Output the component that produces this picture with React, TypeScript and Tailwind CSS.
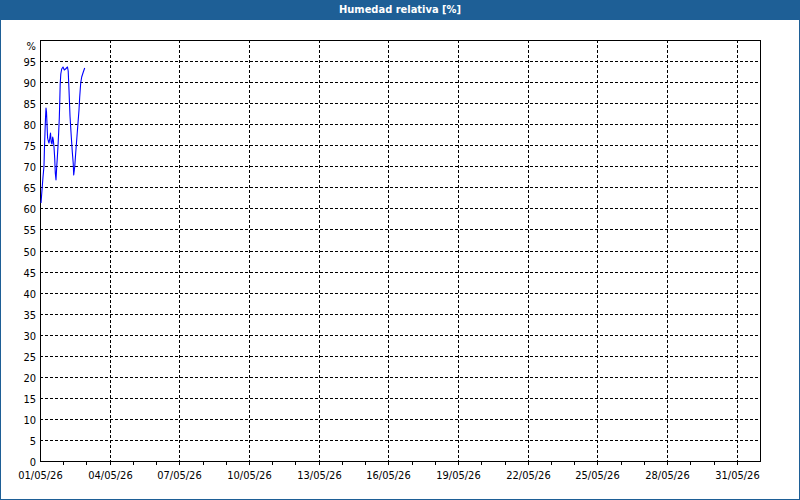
import React from "react";

const FONT = '"DejaVu Sans Condensed", "Liberation Sans", sans-serif';

const L = 40;
const R = 760;
const T = 40;
const B = 461;
const DAYS = 31;

const yOf = (v: number) => Math.round(B - (v * (B - T)) / 100);
const xOf = (d: number) => Math.round(L + (d * (R - L)) / DAYS);

const pts: [number, number][] = [
  [41, 203], [42, 190], [43, 177], [44, 166], [44.4, 150], [45, 132], [45.5, 118],
  [46, 108], [46.5, 112], [47, 124], [47.6, 138], [48.3, 141], [49, 143], [49.7, 139],
  [50.5, 133], [51.2, 142], [52, 144], [52.7, 137], [53.3, 140], [54, 147], [54.7, 158],
  [55.3, 173], [56, 180], [56.7, 167], [57.3, 158], [58, 146], [58.7, 132], [59.3, 118],
  [59.8, 100], [60.2, 84], [60.8, 74], [61.7, 69], [63, 67], [64.3, 70], [65.5, 69],
  [66.5, 68], [67.5, 67], [68.2, 71], [69, 90], [70, 116], [71.3, 137], [72.3, 152],
  [73.2, 163], [73.7, 175], [74.7, 167], [75.7, 153], [76.7, 140], [78, 123], [79, 110],
  [79.7, 97], [80.7, 83], [81.7, 77], [83.3, 72], [84.7, 68],
];

const labels = [
  "01/05/26", "04/05/26", "07/05/26", "10/05/26", "13/05/26", "16/05/26",
  "19/05/26", "22/05/26", "25/05/26", "28/05/26", "31/05/26",
];

export default function App() {
  const hVals: number[] = [];
  for (let v = 5; v <= 95; v += 5) hVals.push(v);
  const yLabels: number[] = [];
  for (let v = 0; v <= 95; v += 5) yLabels.push(v);
  const ticks: number[] = [];
  for (let d = 1; d <= 30; d++) ticks.push(d);

  return (
    <div className="w-[800px] h-[500px] flex flex-col bg-white overflow-hidden">
      <div
        className="h-[20px] shrink-0 bg-[#1e5f96] text-white font-bold text-[11px] flex items-center justify-center"
        style={{ fontFamily: FONT }}
      >
        Humedad relativa [%]
      </div>
      <div className="flex-1 border-x border-b border-[#1e5f96] bg-white">
        <svg
          width={798}
          height={479}
          viewBox="1 20 798 479"
          className="block"
          style={{ fontFamily: FONT }}
        >
          <g shapeRendering="crispEdges" stroke="#000" strokeWidth={1}>
            {hVals.map((v) => (
              <line
                key={"h" + v}
                x1={L}
                x2={R}
                y1={yOf(v) + 0.5}
                y2={yOf(v) + 0.5}
                strokeDasharray="3 2"
              />
            ))}
            {labels.slice(1).map((_, i) => {
              const x = xOf((i + 1) * 3) + 0.5;
              return (
                <line key={"v" + i} x1={x} x2={x} y1={T} y2={B} strokeDasharray="3 2" />
              );
            })}
            {ticks.map((d) => {
              const x = xOf(d) + 0.5;
              return <line key={"t" + d} x1={x} x2={x} y1={B} y2={B + 4} />;
            })}
            <rect x={L + 0.5} y={T + 0.5} width={R - L} height={B - T} fill="none" />
          </g>
          <polyline
            points={pts.map((p) => p.join(",")).join(" ")}
            fill="none"
            stroke="#0000ff"
            strokeWidth={1.1}
            strokeLinejoin="round"
          />
          <g fontSize={11} fill="#000">
            <text x={36} y={46} textAnchor="end" dominantBaseline="central">
              %
            </text>
            {yLabels.map((v) => (
              <text
                key={"yl" + v}
                x={36}
                y={yOf(v) + 1}
                textAnchor="end"
                dominantBaseline="central"
              >
                {v}
              </text>
            ))}
            {labels.map((s, i) => (
              <text
                key={"xl" + i}
                x={xOf(i * 3) + 0.5}
                y={475}
                textAnchor="middle"
                dominantBaseline="central"
              >
                {s}
              </text>
            ))}
          </g>
        </svg>
      </div>
    </div>
  );
}
